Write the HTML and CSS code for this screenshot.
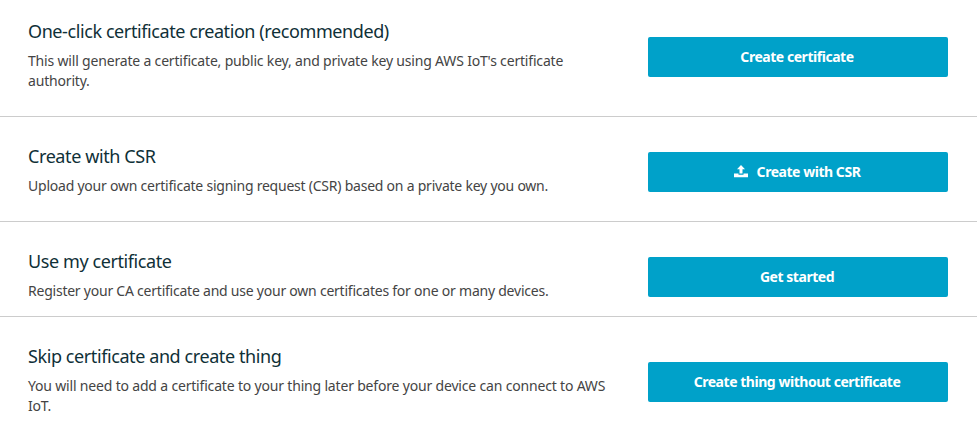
FILE: index.html
```
<!DOCTYPE html>
<html lang="en">
<head>
    <meta charset="UTF-8">
    <meta name="viewport" content="width=device-width, initial-scale=1.0">
    <title>Create a certificate</title>
    <link rel="stylesheet" href="styles.css">
</head>
<body>
    <div class="option-list">
        <section class="option one-click">
            <div class="option-text">
                <h2>One-click certificate creation (recommended)</h2>
                <p>This will generate a certificate, public key, and private key using AWS IoT's certificate<br>authority.</p>
            </div>
            <button class="btn">Create certificate</button>
        </section>
        <section class="option csr">
            <div class="option-text">
                <h2>Create with CSR</h2>
                <p>Upload your own certificate signing request (CSR) based on a private key you own.</p>
            </div>
            <button class="btn">
                <svg class="upload-icon" viewBox="0 0 14 13" width="14" height="13" aria-hidden="true">
                    <path fill="currentColor" d="M7 0l4 4.2H8.5V8.6H5.5V4.2H3zM0 8.6h4.5v1.2h5V8.6H14v3.7H0z"/>
                </svg>
                <span>Create with CSR</span>
            </button>
        </section>
        <section class="option own">
            <div class="option-text">
                <h2>Use my certificate</h2>
                <p>Register your CA certificate and use your own certificates for one or many devices.</p>
            </div>
            <button class="btn">Get started</button>
        </section>
        <section class="option skip">
            <div class="option-text">
                <h2>Skip certificate and create thing</h2>
                <p>You will need to add a certificate to your thing later before your device can connect to AWS<br>IoT.</p>
            </div>
            <button class="btn">Create thing without certificate</button>
        </section>
    </div>
</body>
</html>
```

FILE: styles.css
```
body {
    margin: 0;
    font-family: "Noto Sans", sans-serif;
    background-color: #fff;
    color: #444;
}
.option {
    display: flex;
    justify-content: space-between;
    align-items: flex-start;
    box-sizing: border-box;
    height: 105px;
    padding: 29px 29px 0 28px;
    border-bottom: 1px solid #ccc;
}
.one-click {
    height: 117px;
    padding-top: 21px;
}
.own {
    height: 95px;
}
.skip {
    height: 126px;
    border-bottom: none;
}
h2 {
    margin: 0 0 10px;
    font-size: 18px;
    font-weight: 400;
    line-height: 20px;
    letter-spacing: -0.41px;
    color: #0f3037;
}
p {
    margin: 0;
    font-size: 14px;
    line-height: 20px;
    letter-spacing: -0.18px;
    white-space: nowrap;
}
.csr p, .own p {
    letter-spacing: -0.23px;
}
.btn {
    display: flex;
    align-items: center;
    justify-content: center;
    gap: 9px;
    width: 300px;
    height: 40px;
    margin-top: 6px;
    padding: 0 2px 2px 0;
    border: none;
    border-radius: 2px;
    background-color: #00a1c9;
    color: #fff;
    font-family: inherit;
    font-size: 14px;
    font-weight: 700;
    letter-spacing: -0.46px;
    cursor: pointer;
}
.upload-icon {
    margin-top: 1px;
}
.one-click .btn, .skip .btn {
    margin-top: 16px;
}
```
